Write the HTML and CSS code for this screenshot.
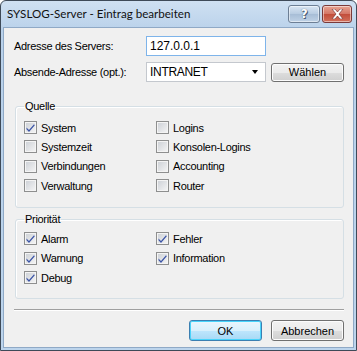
FILE: index.html
```html
<!DOCTYPE html>
<html lang="de">
<head>
    <meta charset="UTF-8">
    <title>SYSLOG-Server - Eintrag bearbeiten</title>
    <link rel="stylesheet" href="styles.css">
</head>
<body>
    <div class="window">
        <div class="titlebar">
            <span class="title">SYSLOG-Server - Eintrag bearbeiten</span>
            <div class="caption-buttons">
                <span class="cap-btn help">?</span>
                <span class="cap-btn close">
                    <svg width="13" height="10" viewBox="0 0 13 10">
                        <path d="M1 0 L4 0 L6.5 3 L9 0 L12 0 L8 5 L12 10 L9 10 L6.5 7 L4 10 L1 10 L5 5 Z" fill="#fff" stroke="#6d2a2a" stroke-width="0.6"/>
                    </svg>
                </span>
            </div>
        </div>

        <div class="client">
            <div class="row">
                <label for="server" class="row-label">Adresse des Servers:</label>
                <input type="text" id="server" class="edit focused" value="127.0.0.1">
            </div>
            <div class="row">
                <label class="row-label">Absende-Adresse (opt.):</label>
                <div class="combo">
                    <span>INTRANET</span>
                    <span class="arrow"></span>
                </div>
                <button class="btn small">Wählen</button>
            </div>

            <fieldset class="group source">
                <legend>Quelle</legend>
                <div class="checks">
                    <label class="check"><span class="box on"><svg width="11" height="11" viewBox="0 0 11 11"><path d="M1.5 5.5 L4 8 L9 2.2 L9.8 3.2 L4 10 L1.5 7.3 Z" fill="#3b54a6"/></svg></span>System</label>
                    <label class="check"><span class="box"></span>Logins</label>
                    <label class="check"><span class="box"></span>Systemzeit</label>
                    <label class="check"><span class="box"></span>Konsolen-Logins</label>
                    <label class="check"><span class="box"></span>Verbindungen</label>
                    <label class="check"><span class="box"></span>Accounting</label>
                    <label class="check"><span class="box"></span>Verwaltung</label>
                    <label class="check"><span class="box"></span>Router</label>
                </div>
            </fieldset>

            <fieldset class="group priority">
                <legend>Priorität</legend>
                <div class="checks">
                    <label class="check"><span class="box on"><svg width="11" height="11" viewBox="0 0 11 11"><path d="M1.5 5.5 L4 8 L9 2.2 L9.8 3.2 L4 10 L1.5 7.3 Z" fill="#3b54a6"/></svg></span>Alarm</label>
                    <label class="check"><span class="box on"><svg width="11" height="11" viewBox="0 0 11 11"><path d="M1.5 5.5 L4 8 L9 2.2 L9.8 3.2 L4 10 L1.5 7.3 Z" fill="#3b54a6"/></svg></span>Fehler</label>
                    <label class="check"><span class="box on"><svg width="11" height="11" viewBox="0 0 11 11"><path d="M1.5 5.5 L4 8 L9 2.2 L9.8 3.2 L4 10 L1.5 7.3 Z" fill="#3b54a6"/></svg></span>Warnung</label>
                    <label class="check"><span class="box on"><svg width="11" height="11" viewBox="0 0 11 11"><path d="M1.5 5.5 L4 8 L9 2.2 L9.8 3.2 L4 10 L1.5 7.3 Z" fill="#3b54a6"/></svg></span>Information</label>
                    <label class="check"><span class="box on"><svg width="11" height="11" viewBox="0 0 11 11"><path d="M1.5 5.5 L4 8 L9 2.2 L9.8 3.2 L4 10 L1.5 7.3 Z" fill="#3b54a6"/></svg></span>Debug</label>
                </div>
            </fieldset>

            <div class="separator"></div>

            <div class="buttons">
                <button class="btn default">OK</button>
                <button class="btn">Abbrechen</button>
            </div>
        </div>
    </div>
</body>
</html>
```

FILE: styles.css
```css
body {
    margin: 0;
    font-family: "Liberation Sans", Arial, sans-serif;
    font-size: 11px;
    letter-spacing: -0.3px;
    color: #000;
}
.window {
    width: 357px;
    height: 351px;
    box-sizing: border-box;
    border: 1px solid #3e4a58;
    border-radius: 6px 6px 0 0;
    background: linear-gradient(#cfe0f2, #b9d1ea 30px, #bcd4ec);
    display: flex;
    flex-direction: column;
}
.titlebar {
    height: 26px;
    display: flex;
    align-items: center;
    justify-content: space-between;
    padding: 0 4px 0 6px;
}
.title {
    font-family: Lato, "Noto Sans", sans-serif;
    font-size: 11.6px;
    letter-spacing: 0;
    color: #111;
    margin-top: -2px;
}
.caption-buttons {
    display: flex;
    gap: 2px;
    align-self: flex-start;
    margin-top: 4px;
}
.cap-btn {
    height: 16px;
    border: 1px solid #6d7f95;
    border-radius: 3px;
    display: flex;
    align-items: center;
    justify-content: center;
    box-shadow: inset 0 0 0 1px rgba(255,255,255,0.5);
}
.help {
    width: 30px;
    background: linear-gradient(#d9e6f3, #b7cbe1 50%, #a7bdd6 51%, #bfd2e6);
    color: #fff;
    font-family: "DejaVu Sans", sans-serif;
    font-weight: bold;
    font-size: 12px;
    text-shadow: 0 0 1px #3d4f66, 1px 1px 0 #4b5f78;
}
.close {
    width: 28px;
    border-color: #7a3a3a;
    background: linear-gradient(#e8a493, #d47565 50%, #c24d3a 51%, #d2705c);
}
.client {
    flex: 1;
    margin: 0 2px 2px;
    border: 1px solid #8fa9c6;
    background: #f0f0f0;
    padding: 8px 9px 0 10px;
    display: flex;
    flex-direction: column;
}
.row {
    display: flex;
    align-items: center;
    height: 20px;
    margin-bottom: 6px;
}
.row-label {
    width: 132px;
}
.edit {
    width: 120px;
    height: 20px;
    box-sizing: border-box;
    border: 1px solid #abadb3;
    padding: 0 3px;
    font: inherit;
    font-size: 12px;
    outline: none;
}
.edit.focused {
    border-color: #7eb4ea;
}
.combo {
    width: 120px;
    height: 20px;
    box-sizing: border-box;
    border: 1px solid #c4c8ce;
    background: #fff;
    display: flex;
    align-items: center;
    justify-content: space-between;
    padding: 0 7px 0 3px;
    font-size: 12px;
}
.arrow {
    width: 0;
    height: 0;
    border-left: 3.5px solid transparent;
    border-right: 3.5px solid transparent;
    border-top: 4px solid #000;
}
.btn {
    font: inherit;
    height: 21px;
    width: 73px;
    box-sizing: border-box;
    border: 1px solid #707070;
    border-radius: 3px;
    background: linear-gradient(#f2f2f2, #ebebeb 50%, #dddddd 51%, #cfcfcf);
    box-shadow: inset 0 0 0 1px #fcfcfc;
    color: #000;
    padding: 0;
}
.btn.small {
    height: 19px;
    margin-left: 5px;
}
.btn.default {
    border-color: #3c7fb1;
    box-shadow: inset 0 0 0 1px #48d4fb;
    background: linear-gradient(#eaf6fd, #d9f0fc 50%, #bee6fd 51%, #a7d9f5);
}
.group {
    margin: 12px 0 0 1px;
    padding: 6px 8px 12px;
    border: 1px solid #d5dfe5;
    border-radius: 3px;
    box-shadow: inset 1px 1px 0 #fff;
}
.group legend {
    padding: 0 1px;
    margin-left: 0;
}
.priority {
    margin-top: 5px;
    padding-top: 4px;
    padding-bottom: 11px;
}
.checks {
    display: grid;
    grid-template-columns: 132px 1fr;
    grid-auto-rows: 19.33px;
    align-items: center;
}
.check {
    display: flex;
    align-items: center;
    gap: 4px;
}
.box {
    width: 13px;
    height: 13px;
    box-sizing: border-box;
    border: 1px solid #8e8f8f;
    background: linear-gradient(135deg, #cbcfd5, #f6f6f6);
    box-shadow: inset 0 0 0 1px #f4f4f4;
    display: flex;
    align-items: center;
    justify-content: center;
}
.separator {
    margin-top: 10px;
    border-top: 1px solid #a0a0a0;
    border-bottom: 1px solid #fff;
}
.buttons {
    display: flex;
    justify-content: flex-end;
    gap: 9px;
    margin-top: 9px;
}
```
